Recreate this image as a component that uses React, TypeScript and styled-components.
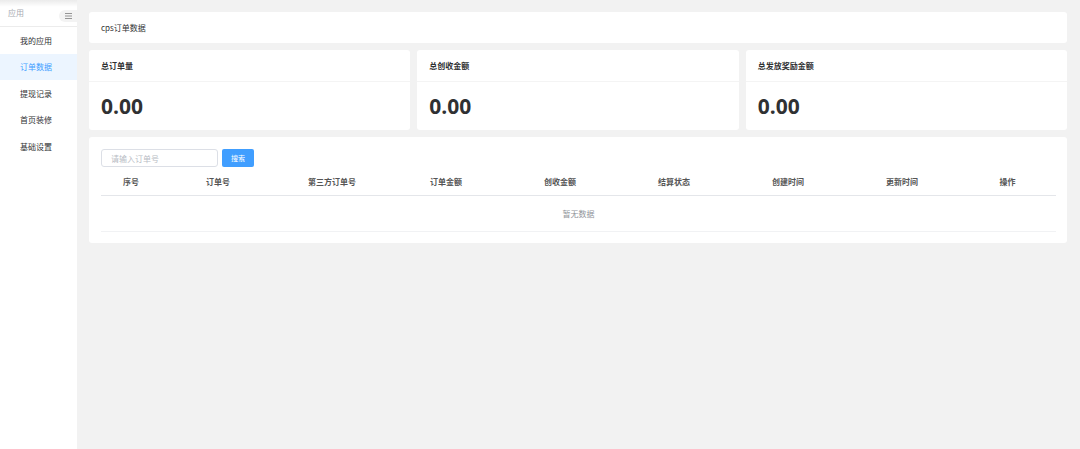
import React from 'react';
import styled, { createGlobalStyle } from 'styled-components';

const GlobalStyle = createGlobalStyle`
  html, body {
    margin: 0;
    padding: 0;
    background: #f2f2f2;
    font-family: "Noto Sans CJK SC", "Noto Sans", sans-serif;
    color: #303133;
  }
  * { box-sizing: border-box; }
`;

const Layout = styled.div`
  display: flex;
  min-height: 449px;
`;

const Sidebar = styled.aside`
  width: 77px;
  flex-shrink: 0;
  background: #fff;
  position: relative;
  &::before {
    content: '';
    position: absolute;
    left: 0;
    right: 0;
    top: 0;
    height: 7px;
    background: linear-gradient(to bottom, rgba(0, 0, 0, 0.08), rgba(0, 0, 0, 0));
  }
`;

const SideHead = styled.div`
  height: 27px;
  display: flex;
  align-items: center;
  justify-content: space-between;
  padding-left: 8px;
  border-bottom: 1px solid #ececec;
`;

const SideTitle = styled.span`
  font-size: 8px;
  color: #a8abb2;
  margin-top: -1px;
`;

const Toggle = styled.button`
  width: 18px;
  height: 12px;
  border: none;
  padding: 0;
  border-radius: 6px 0 0 6px;
  background: #f3f3f3;
  display: flex;
  align-items: center;
  justify-content: center;
  margin-top: 5px;
`;

const MenuItem = styled.div<{ $active?: boolean }>`
  height: 26.5px;
  display: flex;
  align-items: center;
  padding-left: 20px;
  font-size: 8px;
  color: ${p => (p.$active ? '#409eff' : '#303133')};
  background: ${p => (p.$active ? '#ecf5ff' : 'transparent')};
`;

const Main = styled.main`
  flex: 1;
  padding: 12px 13px 12px 12px;
  display: flex;
  flex-direction: column;
  gap: 7px;
`;

const Card = styled.div`
  background: #fff;
  border-radius: 3px;
`;

const TitleCard = styled(Card)`
  height: 31px;
  display: flex;
  align-items: center;
  padding-left: 12px;
  font-size: 8px;
  color: #303133;
`;

const StatRow = styled.div`
  display: grid;
  grid-template-columns: repeat(3, 1fr);
  gap: 7px;
`;

const StatHead = styled.div`
  height: 32px;
  display: flex;
  align-items: center;
  padding-left: 12px;
  font-size: 8px;
  font-weight: 700;
  color: #303133;
  border-bottom: 1px solid #f4f4f4;
`;

const StatValue = styled.div`
  height: 48px;
  display: flex;
  align-items: center;
  padding-left: 12px;
  font-family: "Open Sans", "Noto Sans", sans-serif;
  font-size: 21px;
  font-weight: 700;
  color: #303133;
`;

const TableCard = styled(Card)`
  padding: 12px 11px 11px 12px;
`;

const SearchBar = styled.div`
  display: flex;
  gap: 4px;
`;

const Input = styled.input`
  width: 117px;
  height: 18px;
  border: 1px solid #dcdfe6;
  border-radius: 3px;
  padding: 0 9px;
  font-family: inherit;
  font-size: 8px;
  outline: none;
  &::placeholder { color: #b8bcc4; }
`;

const Button = styled.button`
  width: 32px;
  height: 18px;
  border: none;
  border-radius: 2px;
  background: #409eff;
  color: #fff;
  font-family: inherit;
  font-size: 7px;
  padding: 0;
`;

const Cols = '60px repeat(7, 114px) 1fr';

const HeadRow = styled.div`
  display: grid;
  grid-template-columns: ${Cols};
  height: 29px;
  align-items: center;
  border-bottom: 1px solid #e4e6ea;
`;

const HeadCell = styled.div`
  text-align: center;
  font-size: 8px;
  font-weight: 700;
  color: #555;
`;

const Empty = styled.div`
  height: 36px;
  display: flex;
  align-items: center;
  justify-content: center;
  font-size: 8px;
  color: #909399;
  border-bottom: 1px solid #f1f2f4;
`;

const menu = ['我的应用', '订单数据', '提现记录', '首页装修', '基础设置'];
const stats = ['总订单量', '总创收金额', '总发放奖励金额'];
const columns = ['序号', '订单号', '第三方订单号', '订单金额', '创收金额', '结算状态', '创建时间', '更新时间', '操作'];

export default function App() {
  return (
    <>
      <GlobalStyle />
      <Layout>
        <Sidebar>
          <SideHead>
            <SideTitle>应用</SideTitle>
            <Toggle>
              <svg width="7" height="6" viewBox="0 0 7 6">
                <path d="M0 0.5h7M0 3h7M0 5.5h7" stroke="#8a8a8a" strokeWidth="0.9" />
              </svg>
            </Toggle>
          </SideHead>
          {menu.map(m => (
            <MenuItem key={m} $active={m === '订单数据'}>{m}</MenuItem>
          ))}
        </Sidebar>
        <Main>
          <TitleCard>cps订单数据</TitleCard>
          <StatRow>
            {stats.map(s => (
              <Card key={s}>
                <StatHead>{s}</StatHead>
                <StatValue>0.00</StatValue>
              </Card>
            ))}
          </StatRow>
          <TableCard>
            <SearchBar>
              <Input placeholder="请输入订单号" />
              <Button>搜索</Button>
            </SearchBar>
            <HeadRow>
              {columns.map(c => (
                <HeadCell key={c}>{c}</HeadCell>
              ))}
            </HeadRow>
            <Empty>暂无数据</Empty>
          </TableCard>
        </Main>
      </Layout>
    </>
  );
}
